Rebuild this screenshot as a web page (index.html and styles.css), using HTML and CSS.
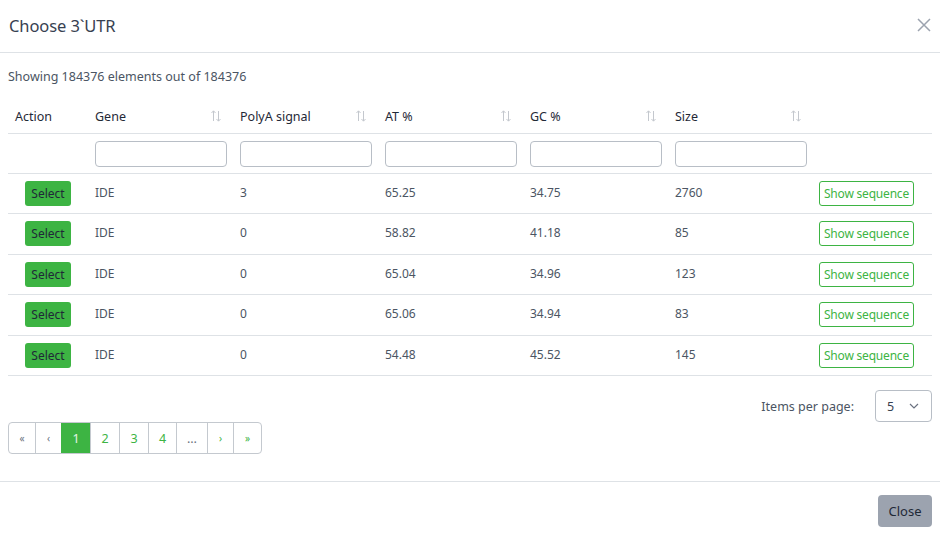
FILE: index.html
```html
<!DOCTYPE html>
<html>
<head>
<meta charset="utf-8">
<link rel="stylesheet" href="styles.css">
</head>
<body>
<div class="modal">
  <div class="modal-header">
    <h5 class="title">Choose 3`UTR</h5>
    <button class="close-x" aria-label="Close">
      <svg width="14" height="14" viewBox="0 0 14 14"><path d="M1 1L13 13M13 1L1 13" stroke="#9ca3af" stroke-width="1.5" fill="none"/></svg>
    </button>
  </div>
  <div class="modal-body">
    <p class="count">Showing 184376 elements out of 184376</p>
    <table class="grid">
      <colgroup>
        <col class="c-action"><col class="c-data"><col class="c-data"><col class="c-data"><col class="c-data"><col class="c-data"><col class="c-last">
      </colgroup>
      <thead>
        <tr class="head">
          <th>Action</th>
          <th><div class="th-in">Gene<span class="sort"><svg width="12" height="14" viewBox="0 0 12 14"><path d="M3.5 12V2M1.5 4L3.5 1.8L5.5 4M8.5 2V12M6.5 10L8.5 12.2L10.5 10" stroke="#c4c8ce" stroke-width="1" fill="none"/></svg></span></div></th>
          <th><div class="th-in">PolyA signal<span class="sort"><svg width="12" height="14" viewBox="0 0 12 14"><path d="M3.5 12V2M1.5 4L3.5 1.8L5.5 4M8.5 2V12M6.5 10L8.5 12.2L10.5 10" stroke="#c4c8ce" stroke-width="1" fill="none"/></svg></span></div></th>
          <th><div class="th-in">AT %<span class="sort"><svg width="12" height="14" viewBox="0 0 12 14"><path d="M3.5 12V2M1.5 4L3.5 1.8L5.5 4M8.5 2V12M6.5 10L8.5 12.2L10.5 10" stroke="#c4c8ce" stroke-width="1" fill="none"/></svg></span></div></th>
          <th><div class="th-in">GC %<span class="sort"><svg width="12" height="14" viewBox="0 0 12 14"><path d="M3.5 12V2M1.5 4L3.5 1.8L5.5 4M8.5 2V12M6.5 10L8.5 12.2L10.5 10" stroke="#c4c8ce" stroke-width="1" fill="none"/></svg></span></div></th>
          <th><div class="th-in">Size<span class="sort"><svg width="12" height="14" viewBox="0 0 12 14"><path d="M3.5 12V2M1.5 4L3.5 1.8L5.5 4M8.5 2V12M6.5 10L8.5 12.2L10.5 10" stroke="#c4c8ce" stroke-width="1" fill="none"/></svg></span></div></th>
          <th></th>
        </tr>
        <tr class="filters">
          <th></th>
          <th><input class="filter" type="text"></th>
          <th><input class="filter" type="text"></th>
          <th><input class="filter" type="text"></th>
          <th><input class="filter" type="text"></th>
          <th><input class="filter" type="text"></th>
          <th></th>
        </tr>
      </thead>
      <tbody>
        <tr><td class="act"><button class="btn-select">Select</button></td><td>IDE</td><td>3</td><td>65.25</td><td>34.75</td><td>2760</td><td class="seq"><button class="btn-seq">Show sequence</button></td></tr>
        <tr><td class="act"><button class="btn-select">Select</button></td><td>IDE</td><td>0</td><td>58.82</td><td>41.18</td><td>85</td><td class="seq"><button class="btn-seq">Show sequence</button></td></tr>
        <tr><td class="act"><button class="btn-select">Select</button></td><td>IDE</td><td>0</td><td>65.04</td><td>34.96</td><td>123</td><td class="seq"><button class="btn-seq">Show sequence</button></td></tr>
        <tr><td class="act"><button class="btn-select">Select</button></td><td>IDE</td><td>0</td><td>65.06</td><td>34.94</td><td>83</td><td class="seq"><button class="btn-seq">Show sequence</button></td></tr>
        <tr><td class="act"><button class="btn-select">Select</button></td><td>IDE</td><td>0</td><td>54.48</td><td>45.52</td><td>145</td><td class="seq"><button class="btn-seq">Show sequence</button></td></tr>
      </tbody>
    </table>
    <div class="per-page">
      <span class="pp-label">Items per page:</span>
      <div class="pp-select"><span>5</span>
        <svg width="10" height="6" viewBox="0 0 10 6"><path d="M1 1L5 5L9 1" stroke="#6b7280" stroke-width="1.2" fill="none"/></svg>
      </div>
    </div>
    <ul class="pager">
      <li class="pg muted small">«</li>
      <li class="pg muted small">‹</li>
      <li class="pg active">1</li>
      <li class="pg">2</li>
      <li class="pg">3</li>
      <li class="pg">4</li>
      <li class="pg muted dots">…</li>
      <li class="pg small">›</li>
      <li class="pg small">»</li>
    </ul>
  </div>
  <div class="modal-footer">
    <button class="btn-close">Close</button>
  </div>
</div>
</body>
</html>
```

FILE: styles.css
```css
* { box-sizing: border-box; }
html, body { margin: 0; padding: 0; background: #fff; }
body {
  font-family: "Noto Sans", "Open Sans", sans-serif;
  color: #4b5563;
  font-size: 12px;
  width: 940px;
  height: 538px;
  overflow: hidden;
}
.modal { width: 940px; }
.modal-header {
  height: 53px;
  border-bottom: 1px solid #dee2e6;
  display: flex;
  align-items: center;
  justify-content: space-between;
  padding: 0 8px 0 9px;
}
.title {
  margin: 0;
  font-size: 16.5px;
  font-weight: 400;
  color: #374151;
  letter-spacing: -0.1px;
  padding-bottom: 2px;
}
.close-x {
  border: 0;
  background: none;
  padding: 0;
  width: 16px;
  height: 16px;
  display: flex;
  align-items: center;
  justify-content: center;
  margin-top: -3px;
}
.modal-body { padding: 0 8px; }
.count {
  margin: 0;
  height: 47px;
  padding-top: 15px;
  font-size: 12.5px;
  color: #4b5563;
}
.grid {
  width: 924px;
  table-layout: fixed;
  border-collapse: collapse;
}
.c-action { width: 80px; }
.c-data { width: 145px; }
.c-last { width: 119px; }
.grid th, .grid td {
  text-align: left;
  padding: 0 7px;
  border-bottom: 1px solid #dee2e6;
}
.head th {
  height: 33px;
  font-weight: 400;
  color: #1f2937;
  font-size: 12.5px;
  padding-top: 0;
  vertical-align: middle;
}
.head th:first-child { padding-left: 7px; }
.th-in {
  display: flex;
  align-items: center;
  justify-content: space-between;
  padding-right: 4px;
}
.sort { display: flex; }
.filters th { height: 40px; vertical-align: middle; }
.filter {
  display: block;
  width: 132px;
  height: 26px;
  border: 1px solid #b8bec6;
  border-radius: 4px;
  background: #fff;
  margin-top: 1px;
}
.grid td {
  height: 40.6px;
  vertical-align: top;
  padding-top: 10px;
  color: #4b5563;
}
.grid td.act { padding: 7px 0 0 17px; }
.grid td.seq { padding: 7px 0 0 0; text-align: right; padding-right: 18px; }
.btn-select {
  font-family: inherit;
  font-size: 12px;
  background: #3db443;
  color: #1f2937;
  border: 0;
  border-radius: 3px;
  height: 25px;
  width: 46px;
  padding: 0;
}
.btn-seq {
  font-family: inherit;
  font-size: 12px;
  background: #fff;
  color: #3db443;
  border: 1px solid #3db443;
  border-radius: 3px;
  height: 25px;
  width: 95px;
  padding: 0;
  letter-spacing: -0.2px;
}
.per-page {
  display: flex;
  justify-content: flex-end;
  align-items: center;
  margin-top: 14px;
  gap: 21px;
}
.pp-label { font-size: 12.5px; color: #4b5563; }
.pp-select {
  width: 57px;
  height: 32px;
  border: 1px solid #b8bec6;
  border-radius: 4px;
  display: flex;
  align-items: center;
  justify-content: space-between;
  padding: 0 12px 0 11px;
  font-size: 12.5px;
  color: #374151;
}
.pager {
  list-style: none;
  margin: 0;
  padding: 0;
  display: flex;
  width: max-content;
  border: 1px solid #c4c9cf;
  border-radius: 4px;
  overflow: hidden;
  height: 32px;
}
.pg {
  height: 30px;
  display: flex;
  align-items: center;
  justify-content: center;
  border-left: 1px solid #c4c9cf;
  color: #3db443;
  font-size: 12.5px;
  width: 28px;
}
.pg:first-child { border-left: 0; width: 28px; }
.pg.small { font-size: 10px; width: 26px; }
.pg.muted { color: #6b7280; }
.pg.dots { width: 31px; }
.pg.active { background: #3db443; color: #e5f5e6; border-left-color: #3db443; width: 29px; }
.pg:nth-child(4), .pg:nth-child(5) { width: 29px; }
.pg:last-child { width: 28px; }
.modal-footer {
  margin-top: 27px;
  border-top: 1px solid #dee2e6;
  display: flex;
  justify-content: flex-end;
  padding: 13px 8px 0 0;
}
.btn-close {
  font-family: inherit;
  font-size: 13px;
  background: #9ca3af;
  color: #1f2937;
  border: 0;
  border-radius: 4px;
  width: 54px;
  height: 32px;
  padding: 0;
}
```
